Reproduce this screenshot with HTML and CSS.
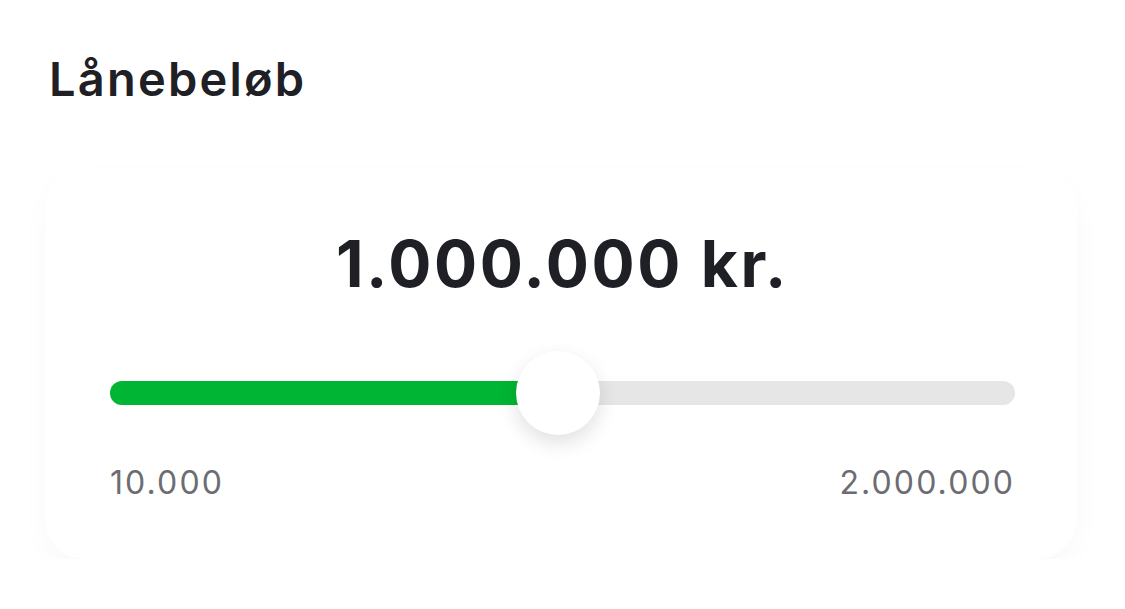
FILE: index.html
```html
<!DOCTYPE html>
<html lang="da">
<head>
    <meta charset="UTF-8">
    <title>Lånebeløb</title>
    <link rel="stylesheet" href="styles.css">
</head>
<body>
<main class="page">
    <h1 class="title">Lånebeløb</h1>

    <section class="card">
        <div class="amount">1.000.000 kr.</div>

        <div class="slider">
            <div class="track">
                <div class="fill" style="width: 49.5%"></div>
                <div class="thumb" style="left: 49.5%"></div>
            </div>
        </div>

        <div class="limits">
            <span>10.000</span>
            <span>2.000.000</span>
        </div>
    </section>
</main>
</body>
</html>
```

FILE: styles.css
```css
* {
    box-sizing: border-box;
}

body {
    margin: 0;
    background: #ffffff;
    font-family: Inter, "Noto Sans", sans-serif;
    color: #1f2025;
}

.page {
    padding: 46px 0 0 45px;
}

.title {
    margin: 0 0 0 4px;
    font-size: 47px;
    font-weight: 600;
    letter-spacing: 2.2px;
    line-height: 66px;
}

.card {
    margin-top: 57px;
    width: 1032px;
    height: 390px;
    border-radius: 40px;
    background: #ffffff;
    box-shadow: 0 12px 30px rgba(0, 0, 0, 0.028);
    padding: 50px 62px 0 65px;
}

.amount {
    text-align: center;
    font-size: 64px;
    font-weight: 700;
    line-height: 90px;
    letter-spacing: 2.6px;
}

.slider {
    padding: 72px 0 0;
}

.track {
    position: relative;
    height: 24px;
    border-radius: 12px;
    background: #e6e6e6;
}

.fill {
    height: 100%;
    border-radius: 12px;
    background: #00b533;
}

.thumb {
    position: absolute;
    top: 50%;
    width: 84px;
    height: 84px;
    margin: -42px 0 0 -42px;
    border-radius: 50%;
    background: #ffffff;
    box-shadow: 0 8px 20px rgba(0, 0, 0, 0.12);
}

.limits {
    display: flex;
    justify-content: space-between;
    margin-top: 58px;
    font-size: 32px;
    color: #6c6c72;
    font-weight: 400;
    letter-spacing: 2.1px;
}
```
